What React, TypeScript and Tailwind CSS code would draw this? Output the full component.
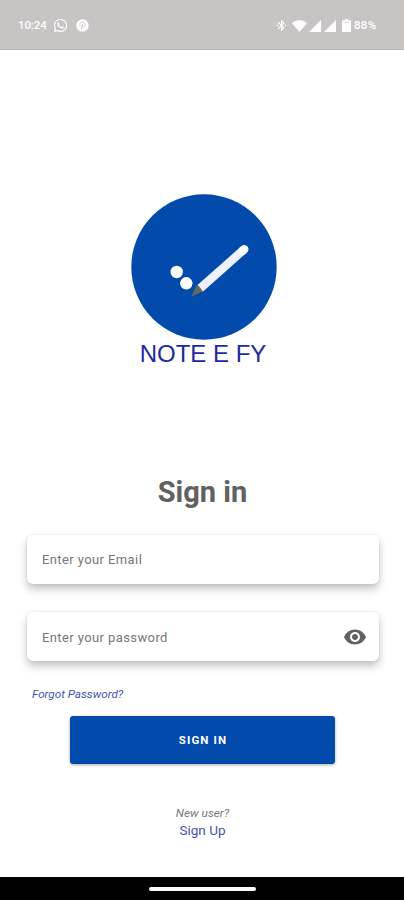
import React from 'react';
import { FaWhatsapp } from 'react-icons/fa';
import { MdBluetoothConnected, MdVisibility } from 'react-icons/md';

const StatusBar: React.FC = () => {
  return (
    <header className="flex h-[50px] items-center justify-between border-b border-[#b9b6b6] bg-[#c8c4c4] pl-[18px] pr-[25px] pt-[2px] text-[11.5px] font-medium text-white">
      <div className="flex items-center">
        <span className="w-[35px] whitespace-nowrap tracking-[-0.1px]">10:24</span>
        <FaWhatsapp className="h-[15px] w-[15px]" />
        <svg className="ml-[8px] h-[13px] w-[13px]" viewBox="0 0 13 13" fill="none">
          <circle cx="6.5" cy="6.5" r="6.2" fill="#fff" />
          <path d="M4.2 7.2C2.8 4.2 5 2.8 6.8 3c2.6.2 3 3.8 1 4.9-.8.4-1.6 0-1.8-.6M6.9 5l-1.5 5" stroke="#c8c4c4" strokeWidth="0.9" strokeLinecap="round" />
        </svg>
      </div>

      <div className="flex items-center">
        <MdBluetoothConnected className="h-[13px] w-[13px]" />
        <svg className="ml-[4px] h-[12px] w-[15px]" viewBox="0 0 15 12" fill="currentColor">
          <path d="M0 3.2C4.2-.6 10.8-.6 15 3.2L7.5 12z" />
        </svg>
        <svg className="ml-[2px] h-[12px] w-[12px]" viewBox="0 0 12 12" fill="currentColor">
          <path d="M12 0v12H0z" />
        </svg>
        <svg className="ml-[3px] h-[12px] w-[12px]" viewBox="0 0 12 12" fill="currentColor">
          <path d="M12 0v12H0z" />
        </svg>
        <svg className="ml-[6px] h-[13px] w-[9px]" viewBox="0 0 9 13" fill="currentColor">
          <path d="M3 0h3v1.3h2q1 0 1 1V12q0 1-1 1H1q-1 0-1-1V2.3q0-1 1-1h2z" />
          <path d="M1.5 3.5h6" stroke="#c8c4c4" strokeWidth="0.6" />
        </svg>
        <span className="ml-[3px] w-[25px] whitespace-nowrap tracking-[0.3px]">88%</span>
      </div>
    </header>
  );
};

const Logo: React.FC = () => {
  return (
    <div className="flex flex-col items-center">
      <svg className="h-[146px] w-[146px]" viewBox="0 0 146 146">
        <circle cx="73" cy="73" r="72.7" fill="#024bac" />
        <circle cx="45.7" cy="78" r="6.2" fill="#fff" />
        <circle cx="55.3" cy="89.3" r="6.2" fill="#fff" />
        {/* Pencil */}
        <path d="M69 94.5L113.5 55" stroke="#eef1fb" strokeWidth="8.4" />
        <path d="M111.5 56.8L113.3 55.2" stroke="#fff" strokeWidth="8.4" strokeLinecap="round" />
        <path d="M60.5 102.5L65.7 90.5Q68 91.5 71.8 97.5Z" fill="#68685f" />
      </svg>
      <h2 className="whitespace-nowrap pr-[2px] font-['Liberation_Sans',sans-serif] text-[24px] leading-[28px] text-[#1c2ba0]">
        NOTE E FY
      </h2>
    </div>
  );
};

const App: React.FC = () => {
  return (
    <div className="flex h-[900px] w-[404px] flex-col overflow-hidden bg-white font-[Roboto,sans-serif]">
      <StatusBar />

      <main className="flex flex-1 flex-col items-center pl-px pt-[144px]">
        <div className="pl-[3px]">
          <Logo />
        </div>

        <h1 className="mt-[105px] text-[29px] font-bold leading-[38px] text-[#616161]">Sign in</h1>

        <div className="mt-[24px] flex h-[49px] w-[352px] items-center rounded-[6px] bg-white px-[15.5px] shadow-[0_5px_9px_rgba(0,0,0,0.24),0_0_3px_rgba(0,0,0,0.08)]">
          <span className="text-[13px] tracking-[0.4px] text-[#777]">Enter your Email</span>
        </div>

        <div className="mt-[28px] flex h-[49px] w-[352px] items-center justify-between rounded-[6px] bg-white pl-[15.5px] pr-[12px] shadow-[0_5px_9px_rgba(0,0,0,0.24),0_0_3px_rgba(0,0,0,0.08)]">
          <span className="pt-[2px] text-[13px] tracking-[0.4px] text-[#777]">Enter your password</span>
          <MdVisibility className="h-[24px] w-[24px] text-[#616161]" />
        </div>

        <a className="ml-[31px] mt-[25px] self-start text-[11.7px] italic leading-[16px] text-[#4253ae]">
          Forgot Password?
        </a>

        <button className="mt-[14px] h-[48px] w-[265px] rounded-[3px] bg-[#024bac] pl-px pt-[2px] text-[11.5px] font-bold tracking-[1.1px] text-white shadow-[0_1px_3px_rgba(0,0,0,0.35)]">
          SIGN IN
        </button>

        <p className="mt-[41px] text-[11.8px] italic leading-[16px] text-[#777]">New user?</p>
        <a className="text-[13.5px] leading-[18px] text-[#4253b5]">Sign Up</a>
      </main>

      <footer className="flex h-[23px] items-center justify-center bg-black">
        <div className="h-[4px] w-[107px] rounded-full bg-white"></div>
      </footer>
    </div>
  );
};

export default App;
